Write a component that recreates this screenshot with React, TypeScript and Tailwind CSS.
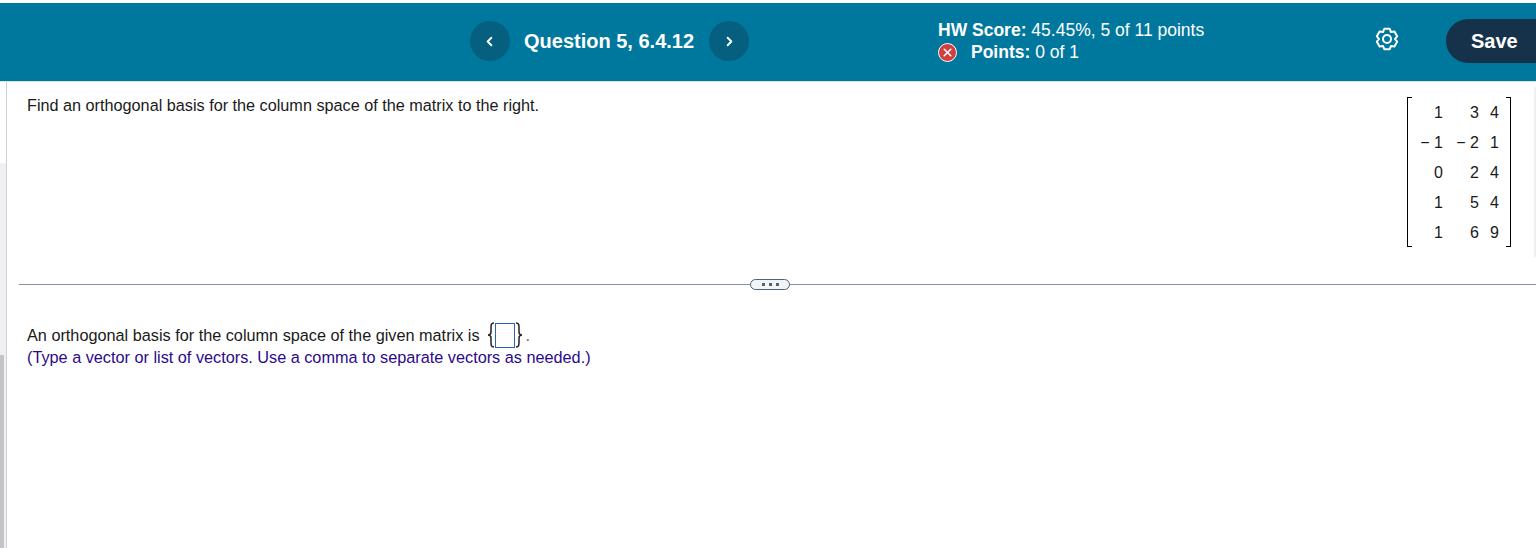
import { ChevronLeft, ChevronRight, X } from 'lucide-react'

const matrix = [
  ['1', '3', '4'],
  ['\u2212 1', '\u2212 2', '1'],
  ['0', '2', '4'],
  ['1', '5', '4'],
  ['1', '6', '9'],
]

function RoundNav({ children }: { children: React.ReactNode }) {
  return (
    <button className="flex h-10 w-10 shrink-0 items-center justify-center rounded-full bg-[#065f7e] text-white">
      {children}
    </button>
  )
}

function Gear() {
  return (
    <svg width="24" height="24" viewBox="0 0 24 24" fill="none" stroke="currentColor" strokeWidth="2" strokeLinejoin="round" className="mb-[4px] shrink-0">
      <path d="M9.28 1.86L14.72 1.86L16 5.07L19.42 4.58L22.14 9.28L20 12L22.14 14.72L19.42 19.42L16 18.93L14.72 22.14L9.28 22.14L8 18.93L4.58 19.42L1.86 14.72L4 12L1.86 9.28L4.58 4.58L8 5.07Z" />
      <circle cx="12" cy="12" r="4" />
    </svg>
  )
}

function Matrix() {
  return (
    <div className="relative mt-[15px] flex h-[150px] w-[104px] shrink-0 flex-col pt-px text-[16px] leading-[30px] text-[#1a1a1a]">
      <div className="absolute left-0 top-0 bottom-0 w-[5px] border-l border-y border-black" />
      <div className="absolute right-0 top-0 bottom-0 w-[5px] border-r border-y border-black" />
      {matrix.map((row, i) => (
        <div key={i} className="grid h-[30px] shrink-0 grid-cols-[36px_36px_20px] justify-end pr-[12px] text-right">
          {row.map((v, j) => (
            <span key={j} className="whitespace-nowrap">{v}</span>
          ))}
        </div>
      ))}
    </div>
  )
}

export default function App() {
  return (
    <div className="flex h-[548px] w-[1536px] flex-col overflow-hidden bg-white pt-[3px] font-['Liberation_Sans',Arial,sans-serif]">
      <header className="flex h-[79px] shrink-0 items-center border-b border-[#d5e3ea] bg-[#00789e] pb-[2px] text-white">
        <div className="ml-[470px] flex w-[279px] items-center">
          <RoundNav><ChevronLeft size={15} strokeWidth={3} className="mr-[2px]" /></RoundNav>
          <span className="ml-[14px] w-[185px] whitespace-nowrap text-[20px] font-bold">Question 5, 6.4.12</span>
          <RoundNav><ChevronRight size={15} strokeWidth={3} /></RoundNav>
        </div>
        <div className="ml-[189px] flex w-[437px] flex-col text-[17.5px] leading-[22px]">
          <div className="whitespace-nowrap"><b>HW Score:</b> 45.45%, 5 of 11 points</div>
          <div className="flex items-center whitespace-nowrap">
            <span className="mr-[14px] flex h-[19px] w-[19px] items-center justify-center rounded-full border border-white bg-[#d13f3f]">
              <X size={13} strokeWidth={3} />
            </span>
            <span><b>Points:</b> 0 of 1</span>
          </div>
        </div>
        <Gear />
        <button className="ml-[47px] flex h-[44px] w-[90px] shrink-0 items-center rounded-l-full bg-[#16324a] pl-[25px] text-[20px] font-bold">
          Save
        </button>
      </header>

      <div className="flex min-h-0 flex-1">
        {/* Left scroll strip */}
        <div className="flex w-[7px] shrink-0 flex-col border-r border-[#ccd0dc]">
          <div className="h-[81px] bg-white" />
          <div className="h-[192px] bg-[#f0f0f0]" />
          <div className="flex-1 bg-[#f0f0f0] pr-[2px]"><div className="h-full bg-[#c4c4c4]" /></div>
        </div>

        <main className="flex min-w-0 flex-1 flex-col">
          <section className="flex h-[202px] shrink-0 items-start pl-[20px]">
            <p className="mt-[11px] flex-1 text-[16.23px] leading-[24px] text-[#1a1a1a]">Find an orthogonal basis for the column space of the matrix to the right.</p>
            <Matrix />
            <div className="ml-[23px] mt-[5px] h-[170px] w-[2px] shrink-0 bg-[#f0f0f0]" />
          </section>

          <div className="relative ml-[12px] h-px shrink-0 bg-[#8a92a0]">
            <div className="absolute left-[731px] -top-[5px] flex h-[11px] w-[40px] items-center justify-center gap-[4px] rounded-full border border-[#4d6477] bg-[#f3f4f6]">
              <i className="h-[3px] w-[3px] bg-[#4d6477]" />
              <i className="h-[3px] w-[3px] bg-[#4d6477]" />
              <i className="h-[3px] w-[3px] bg-[#4d6477]" />
            </div>
          </div>

          <section className="pl-[20px] pt-[39px] text-[16.25px] leading-[22px]">
            <p className="flex h-[22px] items-center whitespace-nowrap text-[#1a1a1a]">
              An orthogonal basis for the column space of the given matrix is
              <span className="ml-[7px] flex items-center">
                <svg width="8" height="26" viewBox="0 0 8 26" fill="none" stroke="#222" strokeWidth="1.5">
                  <path d="M7 1C4 1 4 3 4 6V10C4 12 3 13 1 13C3 13 4 14 4 16V20C4 23 4 25 7 25" />
                </svg>
                <span className="h-[25px] w-[20px] border border-[#2a62b8] bg-white" />
                <svg width="8" height="26" viewBox="0 0 8 26" fill="none" stroke="#222" strokeWidth="1.5">
                  <path d="M1 1C4 1 4 3 4 6V10C4 12 5 13 7 13C5 13 4 14 4 16V20C4 23 4 25 1 25" />
                </svg>
                <span className="ml-[3px] text-[#4d6477]">.</span>
              </span>
            </p>
            <p className="whitespace-nowrap text-[#2b0a8c]">(Type a vector or list of vectors. Use a comma to separate vectors as needed.)</p>
          </section>
        </main>
      </div>
    </div>
  )
}
